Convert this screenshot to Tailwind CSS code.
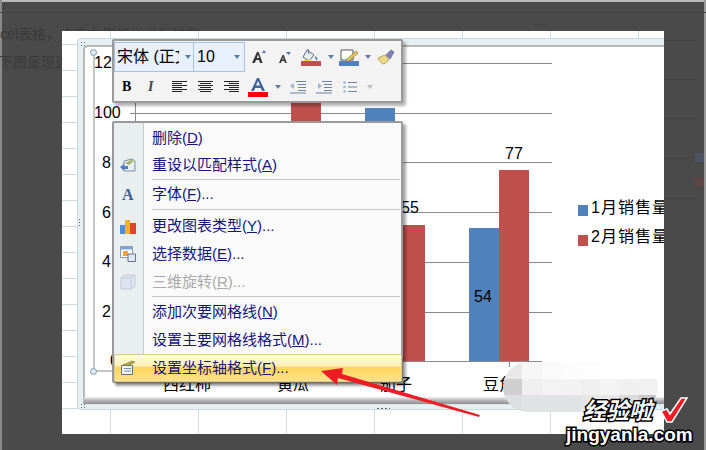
<!DOCTYPE html>
<html lang="zh-CN">
<head>
  <meta charset="UTF-8">
  <title>设置坐标轴格式</title>
  <script src="https://cdn.jsdelivr.net/npm/@tailwindcss/browser@4"></script>
</head>
<body class="bg-[#4a4a4a]">
  <div class="relative w-[706px] h-[450px] overflow-hidden bg-[#4a4a4a] text-black [font-family:'Liberation_Sans','Noto_Sans_CJK_SC',sans-serif]">
    <!-- window edges -->
    <div class="absolute left-0 top-0 w-full h-[2px] bg-[#b9b9b9]"></div>
    <div class="absolute left-0 top-0 w-[2px] h-full bg-[#8a8a8a]"></div>
    <div class="absolute right-0 top-0 w-[2px] h-full bg-[#9a9a9a]"></div>

    <!-- dimmed page behind the sheet -->
    <div class="absolute left-0 top-[25px] text-[14px] leading-[18px] text-[#3a3a3a] whitespace-nowrap">cel表格，点击左侧的纵坐标轴数</div>
    <div class="absolute left-[-1px] top-[53px] text-[14px] leading-[18px] text-[#3a3a3a] whitespace-nowrap">下图呈现选</div>
    <div class="absolute left-[664px] top-[40px] w-[32px] h-px bg-[#434343]"></div>
    <div class="absolute left-[664px] top-[79px] w-[32px] h-px bg-[#434343]"></div>
    <div class="absolute left-[664px] top-[118px] w-[32px] h-px bg-[#434343]"></div>
    <div class="absolute left-[664px] top-[158px] w-[32px] h-px bg-[#434343]"></div>
    <div class="absolute left-[664px] top-[198px] w-[32px] h-px bg-[#434343]"></div>
    <div class="absolute left-[695px] top-[153px] w-[9px] h-[9px] bg-[#4d5461]"></div>
    <div class="absolute left-[695px] top-[177px] w-[9px] h-[9px] bg-[#5f4644]"></div>
    <div class="absolute left-0 top-[12px] w-full h-px bg-[#454545]"></div>
    <div class="absolute left-[534px] top-[22px] text-[8px] leading-[6px] tracking-[1px] text-[#2f2f2f]">····</div>

    <!-- white sheet -->
    <div class="absolute left-[62px] top-[31px] w-[602px] h-[403px] overflow-hidden bg-white">
      <!-- sheet grid -->
      <div class="absolute inset-0 bg-[linear-gradient(to_right,#cfd8e4_1px,transparent_1px),linear-gradient(to_bottom,#cfd8e4_1px,transparent_1px)] bg-[length:88px_26px] bg-[position:48px_13px]"></div>

      <!-- chart frame -->
      <div class="absolute left-[15px] top-[7px] w-[640px] h-[372px] rounded-tl-[4px] rounded-bl-[4px] border border-[#c9d8da] bg-[#e3f1f2]"></div>
      <div class="absolute left-[21px] top-[14px] w-[640px] h-[359px] rounded-tl-[5px] bg-white border-l-2 border-t-2 border-[#b8b8b8]"></div>
      <div class="absolute left-[22px] top-[366px] w-[640px] h-[7px] bg-gradient-to-b from-[#f0f0f0] via-[#b5b5b5] to-[#8f8f8f]"></div>
      <div class="absolute left-[22px] top-[373px] w-[640px] h-[1px] bg-[#e0e6e6]"></div>

      <!-- chart selection rectangle -->
      <div class="absolute left-[31px] top-[21px] w-[2px] h-[319px] bg-[#c6c6c6]"></div>
      <div class="absolute left-[31px] top-[339px] w-[40px] h-[2px] bg-[#c6c6c6]"></div>
      <div class="absolute left-[28px] top-[18px] w-[7px] h-[7px] rounded-full border border-[#7f9db9] bg-[#dfe9f2]"></div>
      <div class="absolute left-[28px] top-[337px] w-[7px] h-[7px] rounded-full border border-[#7f9db9] bg-[#dfe9f2]"></div>

      <!-- gridlines and axes -->
      <div class="absolute left-[73px] top-[32px] w-[417px] h-px bg-[#8a8a8a]"></div>
      <div class="absolute left-[68px] top-[82px] w-[422px] h-px bg-[#8a8a8a]"></div>
      <div class="absolute left-[73px] top-[131px] w-[417px] h-px bg-[#8a8a8a]"></div>
      <div class="absolute left-[73px] top-[181px] w-[417px] h-px bg-[#8a8a8a]"></div>
      <div class="absolute left-[73px] top-[231px] w-[417px] h-px bg-[#8a8a8a]"></div>
      <div class="absolute left-[73px] top-[281px] w-[417px] h-px bg-[#8a8a8a]"></div>
      <div class="absolute left-[73px] top-[330px] w-[407px] h-px bg-[#8a8a8a]"></div>
      <div class="absolute left-[73px] top-[32px] w-px h-[298px] bg-[#8a8a8a]"></div>
      <div class="absolute left-[447px] top-[330px] w-px h-[6px] bg-[#8a8a8a]"></div>

      <!-- bars -->
      <div class="absolute left-[229px] top-[72px] w-[30px] h-[258px] bg-[#c0504d]"></div>
      <div class="absolute left-[303px] top-[77px] w-[30px] h-[253px] bg-[#4f81bd]"></div>
      <div class="absolute left-[333px] top-[194px] w-[30px] h-[136px] bg-[#c0504d]"></div>
      <div class="absolute left-[407px] top-[197px] w-[30px] h-[133px] bg-[#4f81bd]"></div>
      <div class="absolute left-[437px] top-[139px] w-[30px] h-[191px] bg-[#c0504d]"></div>

      <!-- value labels -->
      <div class="absolute left-[32px] top-[23px] text-[16px] leading-[18px]">12</div>
      <div class="absolute left-[32px] top-[73px] text-[16px] leading-[18px]">100</div>
      <div class="absolute left-[40px] top-[123px] text-[16px] leading-[18px]">8</div>
      <div class="absolute left-[40px] top-[173px] text-[16px] leading-[18px]">6</div>
      <div class="absolute left-[40px] top-[222px] text-[16px] leading-[18px]">4</div>
      <div class="absolute left-[40px] top-[272px] text-[16px] leading-[18px]">2</div>
      <div class="absolute left-[48px] top-[321px] text-[16px] leading-[18px]">0</div>
      <div class="absolute left-[443px] top-[114px] text-[16px] leading-[18px]">77</div>
      <div class="absolute left-[339px] top-[168px] text-[16px] leading-[18px]">55</div>
      <div class="absolute left-[412px] top-[257px] text-[16px] leading-[18px]">54</div>

      <!-- category labels -->
      <div class="absolute left-[101px] top-[344px] text-[16px] leading-[20px]">西红柿</div>
      <div class="absolute left-[215px] top-[344px] text-[16px] leading-[20px]">黄瓜</div>
      <div class="absolute left-[318px] top-[344px] text-[16px] leading-[20px]">茄子</div>
      <div class="absolute left-[421px] top-[344px] text-[16px] leading-[20px]">豆角</div>

      <!-- legend -->
      <div class="absolute left-[516px] top-[174px] w-[10px] h-[11px] bg-[#4f81bd]"></div>
      <div class="absolute left-[529px] top-[166px] text-[16px] leading-[22px] tracking-[1px] whitespace-nowrap">1月销售量</div>
      <div class="absolute left-[516px] top-[204px] w-[10px] h-[11px] bg-[#c0504d]"></div>
      <div class="absolute left-[529px] top-[195px] text-[16px] leading-[22px] tracking-[1px] whitespace-nowrap">2月销售量</div>
    </div>

    <!-- resize dots on the chart frame -->
    <div class="absolute left-[80px] top-[41px] w-[6px] h-[6px] bg-[radial-gradient(#667_1px,transparent_1px)] bg-[length:3px_3px]"></div>
    <div class="absolute left-[78px] top-[218px] w-[3px] h-[9px] bg-[radial-gradient(#667_1px,transparent_1px)] bg-[length:3px_3px]"></div>
    <div class="absolute left-[80px] top-[403px] w-[6px] h-[6px] bg-[radial-gradient(#667_1px,transparent_1px)] bg-[length:3px_3px]"></div>
    <div class="absolute left-[376px] top-[407px] w-[14px] h-[3px] bg-[radial-gradient(#667_1px,transparent_1px)] bg-[length:4px_3px]"></div>

    <!-- mini toolbar -->
    <div class="absolute left-[112px] top-[39px] w-[291px] h-[64px] rounded-[2px] border-2 border-[#9a9a9a] bg-[#f3f3f3] shadow-[3px_3px_3px_rgba(0,0,0,0.3)]">
      <div class="flex h-[31px] items-center">
        <div class="flex w-[80px] h-[30px] items-center border border-[#aac0df] bg-[#e8f0fb]">
          <span class="w-[64px] pl-[2px] overflow-hidden whitespace-nowrap text-[16px] leading-[20px]">宋体 (正文)</span>
          <svg class="ml-[6px]" width="6" height="4" viewBox="0 0 6 4"><path d="M0 0h6L3 4z" fill="#5b7fa8"/></svg>
        </div>
        <div class="flex w-[51px] h-[30px] items-center border border-l-0 border-[#aac0df] bg-[#e8f0fb]">
          <span class="w-[40px] pl-[3px] text-[16px] leading-[20px]">10</span>
          <svg width="6" height="4" viewBox="0 0 6 4"><path d="M0 0h6L3 4z" fill="#5b7fa8"/></svg>
        </div>
        <!-- grow font -->
        <svg class="ml-[6px]" width="16" height="16" viewBox="0 0 16 16"><path d="M1 14l5-11h1.6l4 11h-2.6l-1-3H5l-1.200 3zM5.800 9h2.400L7 5.500z" fill="#333"/><path d="M11 4l2-3 2 3z" fill="#4a76ad"/></svg>
        <!-- shrink font -->
        <svg class="ml-[11px]" width="14" height="14" viewBox="0 0 14 14"><path d="M1 13l3.500-8h1.300l3 8H7l-.7-2H3.700l-.8 2zM4.300 9.500h1.500L5 7z" fill="#333"/><path d="M8 2h5l-2.500 3z" fill="#4a76ad"/></svg>
        <!-- fill colour -->
        <svg class="ml-[9px]" width="20" height="18" viewBox="0 0 20 18"><path d="M6 2l7 5-5 6-6-4z" fill="#e8eef6" stroke="#58718f"/><path d="M7 1l1 5" stroke="#58718f"/><path d="M14 8c2 1 3 3 2 4s-2-2-2-4z" fill="#4a76ad"/><path d="M3 12h6v1H3z" fill="#f2d13b"/><path d="M0 13h20v5H0z" fill="#c0504d"/></svg>
        <svg class="ml-[7px]" width="6" height="4" viewBox="0 0 6 4"><path d="M0 0h6L3 4z" fill="#5b7fa8"/></svg>
        <!-- line colour -->
        <svg class="ml-[5px]" width="20" height="18" viewBox="0 0 20 18"><path d="M2 2h12v10H2z" fill="#fff" stroke="#555"/><path d="M8 11l9-8 2 2-9 8-3 1z" fill="#e9bf5b" stroke="#8d6a2b" stroke-width=".6"/><path d="M0 13h20v5H0z" fill="#4f81bd"/></svg>
        <svg class="ml-[6px]" width="6" height="4" viewBox="0 0 6 4"><path d="M0 0h6L3 4z" fill="#5b7fa8"/></svg>
        <!-- format painter -->
        <svg class="ml-[6px]" width="18" height="16" viewBox="0 0 18 16"><path d="M1 9l7-3 4 5-5 4c-2 0-5-3-6-6z" fill="#eed98a" stroke="#a8914a" stroke-width=".8"/><path d="M9 6l5-5 3 2-4 7z" fill="#7d7fb5" stroke="#54568a" stroke-width=".6"/></svg>
      </div>
      <div class="flex h-[29px] items-center">
        <span class="ml-[8px] w-[12px] text-[14px] leading-[16px] font-bold [font-family:'Liberation_Serif',serif]">B</span>
        <span class="ml-[14px] w-[10px] text-[14px] leading-[16px] font-bold italic text-[#444] [font-family:'Liberation_Serif',serif]">I</span>
        <svg class="ml-[14px]" width="15" height="12" viewBox="0 0 15 12"><path d="M0 .5h15M0 2.500h10M0 4.500h15M0 6.500h10M0 8.500h15M0 10.500h10" stroke="#222"/></svg>
        <svg class="ml-[11px]" width="15" height="12" viewBox="0 0 15 12"><path d="M0 .5h15M2 2.500h11M0 4.500h15M2 6.500h11M0 8.500h15M2 10.500h11" stroke="#222"/></svg>
        <svg class="ml-[11px]" width="15" height="12" viewBox="0 0 15 12"><path d="M0 .5h15M5 2.500h10M0 4.500h15M5 6.500h10M0 8.500h15M5 10.500h10" stroke="#222"/></svg>
        <!-- font colour -->
        <svg class="ml-[9px]" width="20" height="20" viewBox="0 0 20 20"><path d="M3 14L9 1h2l6 13h-3l-1.300-3H7.200L6 14zM8 8.500h4L10 4z" fill="#3f659b"/><path d="M0 15h20v5H0z" fill="#f00"/></svg>
        <svg class="ml-[7px]" width="6" height="4" viewBox="0 0 6 4"><path d="M0 0h6L3 4z" fill="#5b7fa8"/></svg>
        <!-- decrease indent -->
        <svg class="ml-[9px]" width="16" height="14" viewBox="0 0 16 14"><path d="M6 1.500h10M8 4.500h8M8 7.500h8M8 10.500h8M0 13h16" stroke="#6d84a3"/><path d="M0 6l4-3v6z" fill="#9db7d8"/></svg>
        <!-- increase indent -->
        <svg class="ml-[10px]" width="16" height="14" viewBox="0 0 16 14"><path d="M6 1.500h10M8 4.500h8M8 7.500h8M8 10.500h8M0 13h16" stroke="#6d84a3"/><path d="M6 6L2 3v6z" fill="#9db7d8"/></svg>
        <!-- bullets -->
        <svg class="ml-[11px]" width="14" height="14" viewBox="0 0 14 14"><path d="M5 2.500h9M5 7h9M5 11.500h9" stroke="#6d84a3"/><circle cx="1.500" cy="2.500" r="1.300" fill="#9db7d8"/><circle cx="1.500" cy="7" r="1.300" fill="#9db7d8"/><circle cx="1.500" cy="11.500" r="1.300" fill="#9db7d8"/></svg>
        <svg class="ml-[10px]" width="6" height="4" viewBox="0 0 6 4"><path d="M0 0h6L3 4z" fill="#bbb"/></svg>
      </div>
    </div>

    <!-- context menu -->
    <div class="absolute left-[112px] top-[121px] w-[291px] h-[262px] rounded-[2px] border-2 border-[#9a9a9a] pt-[1px] shadow-[3px_3px_3px_rgba(0,0,0,0.35)] bg-[linear-gradient(to_right,#e9eeee_29px,#c8cccc_29px,#c8cccc_30px,#fafafa_30px)] text-[15px] text-[#15157a]">
      <div class="flex h-[28px] items-center pl-[38px]"><span>删除(<u>D</u>)</span></div>
      <div class="flex h-[27px] items-center">
        <svg class="ml-[6px] mr-[16px]" width="16" height="16" viewBox="0 0 16 16"><path d="M4 3l8-2 3 2v10H4z" fill="#e9eef5" stroke="#7d8ea5"/><path d="M5 5l6-3 3 1-5 4z" fill="#a7b765"/><path d="M0 9l4-3v2h4v3H4v2z" fill="#4d80c0"/></svg>
        <span class="whitespace-nowrap">重设以匹配样式(<u>A</u>)</span>
      </div>
      <div class="ml-[38px] mr-[1px] h-px bg-[#c8c8c8]"></div>
      <div class="flex h-[29px] items-center">
        <span class="ml-[8px] mr-[18px] w-[12px] text-[16px] leading-[18px] font-bold text-[#3f5f95] [font-family:'Liberation_Serif',serif]">A</span>
        <span>字体(<u>F</u>)...</span>
      </div>
      <div class="ml-[38px] mr-[1px] h-px bg-[#c8c8c8]"></div>
      <div class="mt-[2px] flex h-[28px] items-center">
        <svg class="ml-[6px] mr-[16px]" width="16" height="16" viewBox="0 0 16 16"><path d="M0 7h5v9H0z" fill="#4f90d0"/><path d="M5 2h5v14H5z" fill="#f0b030"/><path d="M10 5h6v11h-6z" fill="#e0442c"/></svg>
        <span>更改图表类型(<u>Y</u>)...</span>
      </div>
      <div class="flex h-[28px] items-center">
        <svg class="ml-[6px] mr-[16px]" width="16" height="16" viewBox="0 0 16 16"><path d="M.5.5h12v11H.5z" fill="#fff" stroke="#8a9bb0"/><path d="M1 1h11v2.500H1z" fill="#7fa6d6"/><path d="M3 5h5v5H3z" fill="#f2a23c"/><path d="M8 8h7.500v7.500H8z" fill="#dfe7f1" stroke="#65788f"/></svg>
        <span>选择数据(<u>E</u>)...</span>
      </div>
      <div class="flex h-[28px] items-center text-[#a9a9a9]">
        <svg class="ml-[6px] mr-[16px]" width="16" height="16" viewBox="0 0 16 16"><path d="M1 4l4-3h10v11l-4 3H1z" fill="#dde3ef" stroke="#c3cbdb"/><path d="M1 4h10v11M11 4l4-3" fill="none" stroke="#c3cbdb"/></svg>
        <span>三维旋转(<u>R</u>)...</span>
      </div>
      <div class="ml-[38px] mr-[1px] h-px bg-[#c8c8c8]"></div>
      <div class="mt-[1px] flex h-[28px] items-center pl-[38px]"><span>添加次要网格线(<u>N</u>)</span></div>
      <div class="flex h-[28px] items-center pl-[38px]"><span>设置主要网格线格式(<u>M</u>)...</span></div>
      <div class="flex h-[28px] w-[288px] items-center rounded-[2px] border border-[#dccb8e] bg-[linear-gradient(to_bottom,#fffbe8_0%,#ffefb5_42%,#ffd65c_48%,#ffe28a_100%)] shadow-[1px_2px_2px_rgba(0,0,0,0.3)]">
        <svg class="ml-[5px] mr-[16px]" width="16" height="16" viewBox="0 0 16 16"><path d="M1.500 5.500h11v9h-11z" fill="#f4f6f9" stroke="#5f6f85"/><path d="M4 8.500h7M4 11h7" stroke="#7a8ba3"/><path d="M3 5l9-4 3 1-7 4z" fill="#a9a84c" stroke="#6c7030" stroke-width=".5"/></svg>
        <span>设置坐标轴格式(<u>F</u>)...</span>
      </div>
    </div>

    <!-- mosaic blur over the chart corner -->
    <div class="absolute left-[503px] top-[362px] w-[155px] h-[50px] overflow-hidden rounded-[28px] grid grid-cols-8 grid-rows-3">
      <div class="bg-[#e9e7e7]"></div><div class="bg-[#f7f6f6]"></div><div class="bg-[#fafafa]"></div><div class="bg-[#fcfcfc]"></div><div class="bg-[#fdfdfd]"></div><div class="bg-white"></div><div class="bg-white"></div><div class="bg-white"></div>
      <div class="bg-[#cfcfcf]"></div><div class="bg-[#f0efef]"></div><div class="bg-[#f3f3f3]"></div><div class="bg-[#f2f2f2]"></div><div class="bg-[#efefef]"></div><div class="bg-[#f3f3f3]"></div><div class="bg-[#f0f0f0]"></div><div class="bg-[#f1f1f1]"></div>
      <div class="bg-[#dcdfdf]"></div><div class="bg-[#dfe3e3]"></div><div class="bg-[#dfe3e3]"></div><div class="bg-[#e0e3e3]"></div><div class="bg-[#e5e7e7]"></div><div class="bg-[#e8e8e8]"></div><div class="bg-[#dcdcdc]"></div><div class="bg-[#c8c8c8]"></div>
    </div>

    <!-- red arrow -->
    <svg class="absolute left-0 top-0" width="706" height="450" viewBox="0 0 706 450"><path d="M321 371L343 368L342 374L480 415L479 417L338 378L337 385z" fill="#ee1c25"/></svg>

    <!-- watermark -->
    <div class="absolute left-[583px] top-[397px] text-[23px] leading-[28px] font-bold italic text-white whitespace-nowrap [-webkit-text-stroke:3px_black] [paint-order:stroke_fill]">经验啦</div>
    <svg class="absolute left-[660px] top-[397px]" width="28" height="26" viewBox="0 0 28 26"><path d="M1 14l6-2 3 5L21 1h6L12 25H7z" fill="#ee1c25" stroke="#fff" stroke-width="1.500"/></svg>
    <div class="absolute left-[566px] top-[423px] text-[19px] leading-[24px] font-bold text-white whitespace-nowrap [-webkit-text-stroke:3px_black] [paint-order:stroke_fill]">jingyanla.com</div>
  </div>
</body>
</html>
